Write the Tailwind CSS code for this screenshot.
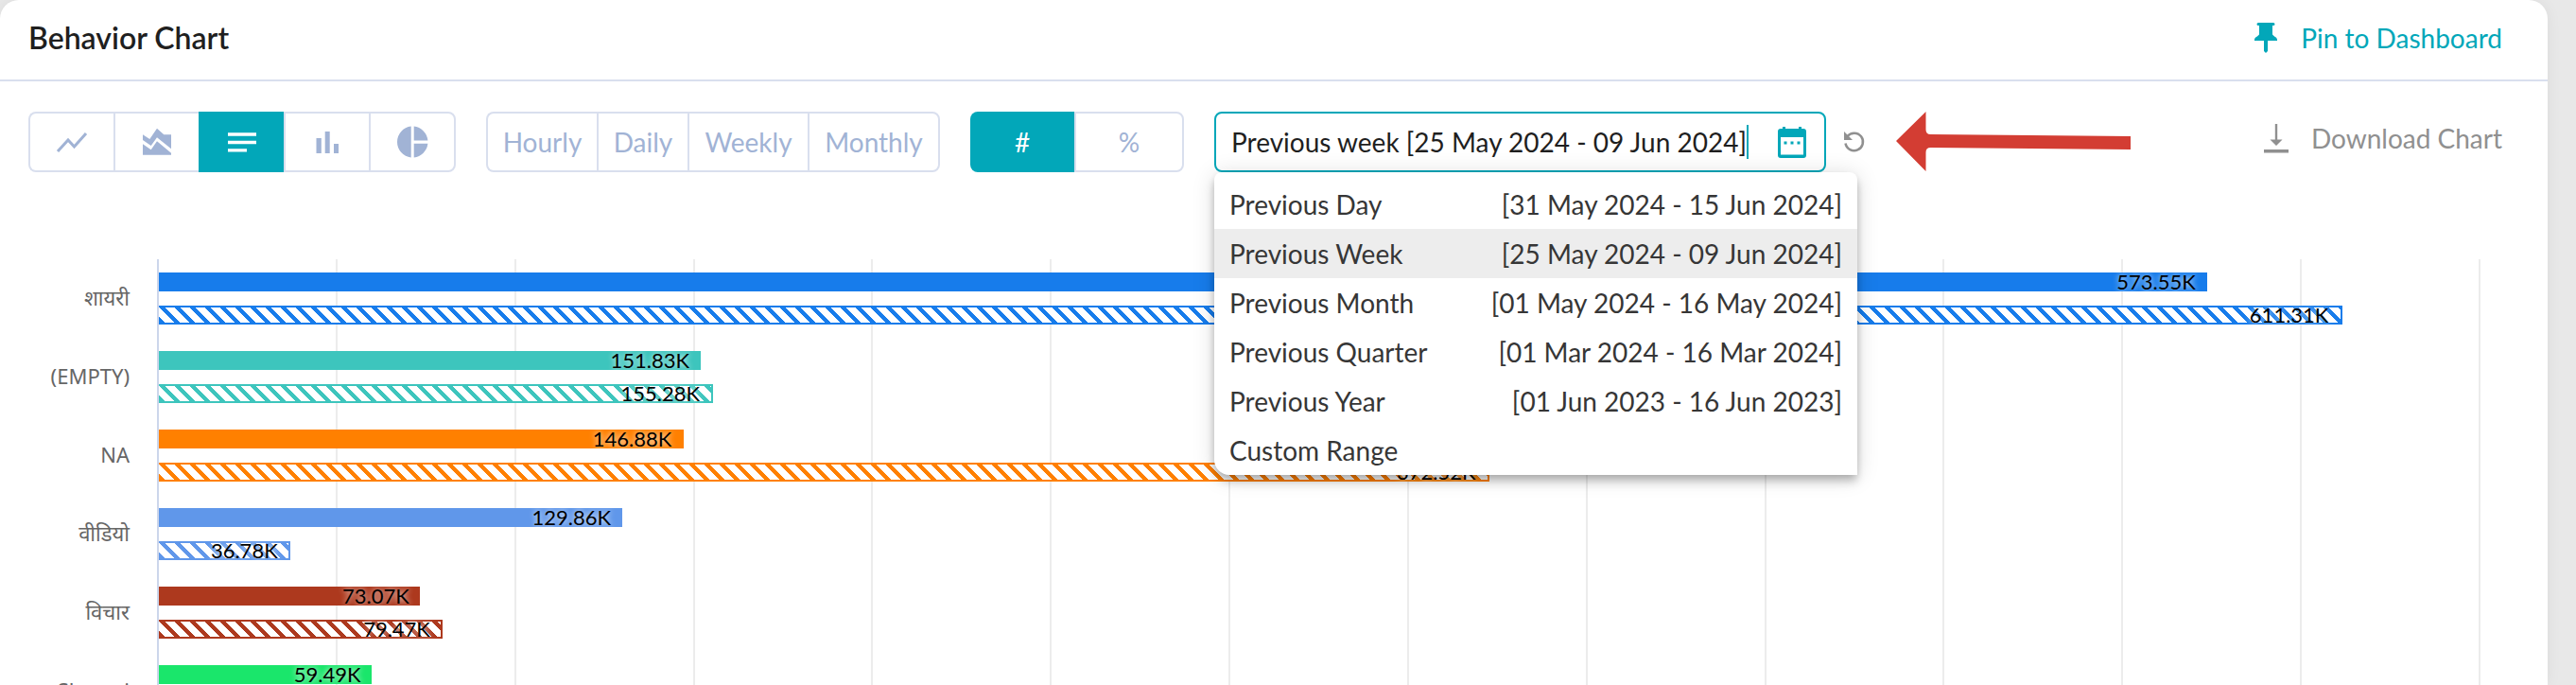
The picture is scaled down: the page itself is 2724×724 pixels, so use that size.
<!DOCTYPE html>
<html lang="en">
<head>
<meta charset="utf-8">
<title>Behavior Chart</title>
<script src="https://cdn.jsdelivr.net/npm/@tailwindcss/browser@4"></script>
</head>
<body class="h-screen overflow-hidden bg-[#e8e8e8] font-['Lato','Noto_Sans',sans-serif] text-[28px] leading-9">
<main class="mr-[30px] h-full overflow-hidden rounded-t-[20px] bg-white shadow-[0_0_16px_rgba(0,0,0,0.06)]">
  <header class="flex h-[86px] items-center justify-between border-b-2 border-[#d9dfee] pr-12 pb-1 pl-[30px]">
    <h1 class="text-[32px] font-semibold text-[#1f1f1f]">Behavior Chart</h1>
    <button type="button" class="flex items-center gap-6 text-[#02a7b9]">
      <svg class="h-9 w-[26px]" viewBox="0 0 26 36" fill="currentColor" aria-hidden="true"><path d="M5 2h16a1.500 1.500 0 0 1 0 3h-1v9c0 2 5 3 5 6v1H15v11l-2 2-2-2V21H1v-1c0-3 5-4 5-6V5H5a1.500 1.500 0 0 1 0-3z"/></svg>
      Pin to Dashboard
    </button>
  </header>

  <section class="flex items-center gap-8 pt-8 pr-12 pl-[30px] text-[#a1b3d5]" aria-label="Chart controls">
    <div class="flex h-16" role="group" aria-label="Chart type">
      <button type="button" aria-label="Line" class="flex w-[90px] items-center justify-center rounded-l-lg border-y-2 border-l-2 border-[#d9dfee]">
        <svg class="size-9" viewBox="0 0 36 36" fill="none" stroke="currentColor" stroke-width="3" aria-hidden="true"><path d="M3 28 14 16 20.500 23 33 9"/></svg>
      </button>
      <button type="button" aria-label="Area" class="flex w-[90px] items-center justify-center border-y-2 border-l-2 border-[#d9dfee]">
        <svg class="size-9" viewBox="0 0 36 36" fill="currentColor" aria-hidden="true"><path d="M3 10.300 10.300 15 18 3.700 25.300 10.300H33v15L18 13.300 11.700 22 3 16zM3 20.300l8.700 6 6.300-9 15 12.400v2H3z"/></svg>
      </button>
      <button type="button" aria-label="Horizontal bars" aria-pressed="true" class="flex w-[90px] items-center justify-center border-y-2 border-l-2 border-[#02a7b9] bg-[#02a7b9] text-white">
        <svg class="size-9" viewBox="0 0 36 36" fill="currentColor" aria-hidden="true"><path d="M3 8.300h30v3.400H3zM3 16.800h30v3.400H3zM3 25.200h20v3.400H3z"/></svg>
      </button>
      <button type="button" aria-label="Columns" class="flex w-[90px] items-center justify-center border-y-2 border-l-2 border-[#d9dfee]">
        <svg class="size-9" viewBox="0 0 36 36" fill="currentColor" aria-hidden="true"><path d="M6.500 14h5.300v16H6.500zM15.700 7h5v23h-5zM25 20h5v10h-5z"/></svg>
      </button>
      <button type="button" aria-label="Pie" class="flex w-[92px] items-center justify-center rounded-r-lg border-2 border-[#d9dfee]">
        <svg class="size-9" viewBox="0 0 36 36" fill="currentColor" aria-hidden="true"><path d="M16.700 1.600a16.500 16.500 0 0 0 0 32.800zM19.700 1.600V16.500H34.400A16.500 16.500 0 0 0 19.700 1.600zM19.700 19.800V34.400A16.500 16.500 0 0 0 34.400 19.800z"/></svg>
      </button>
    </div>

    <div class="flex h-16" role="group" aria-label="Granularity">
      <button type="button" class="w-[117px] rounded-l-lg border-y-2 border-l-2 border-[#d9dfee]">Hourly</button>
      <button type="button" class="w-24 border-y-2 border-l-2 border-[#d9dfee]">Daily</button>
      <button type="button" class="w-[127px] border-y-2 border-l-2 border-[#d9dfee]">Weekly</button>
      <button type="button" class="w-[140px] rounded-r-lg border-2 border-[#d9dfee]">Monthly</button>
    </div>

    <div class="flex h-16" role="group" aria-label="Unit">
      <button type="button" aria-pressed="true" class="w-[110px] rounded-l-lg bg-[#02a7b9] text-white">#</button>
      <button type="button" class="w-[116px] rounded-r-lg border-2 border-[#d9dfee]">%</button>
    </div>

    <div class="relative flex items-center gap-[18px]">
      <label class="flex h-16 w-[647px] items-center rounded-lg border-2 border-[#02a7b9] pr-[18px] pl-4">
        <input type="text" aria-label="Compare with" value="Previous week [25 May 2024 - 09 Jun 2024]" class="field-sizing-content text-[#1f1f1f] outline-none">
        <span class="h-9 w-0.5 bg-[#02a7b9]"></span>
        <svg class="ml-auto h-9 w-8 text-[#02a7b9]" viewBox="0 0 32 36" aria-hidden="true"><path fill="currentColor" fill-rule="evenodd" d="M6 2h3v2h14V2h3v2h2a3 3 0 0 1 3 3v25a3 3 0 0 1-3 3H4a3 3 0 0 1-3-3V7a3 3 0 0 1 3-3h2zM4 13v18.500h24V13zM7.500 17.500h3v3h-3zM14.500 17.500h3v3h-3zM21.500 17.500h3v3h-3z"/></svg>
      </label>
      <button type="button" aria-label="Reset" class="text-[#909090]">
        <svg class="size-6" viewBox="0 0 24 24" aria-hidden="true"><path d="M2.500 13.500A9.300 9.300 0 1 0 4.500 6" fill="none" stroke="currentColor" stroke-width="2.500"/><path d="M1 1v9h9z" fill="currentColor"/></svg>
      </button>
      <ul role="listbox" aria-label="Compare range" class="absolute top-full left-0 z-20 w-[680px] rounded-t-lg rounded-bl-2xl bg-white pt-2 text-[#363636] shadow-[0_4px_8px_-2px_rgba(0,0,0,0.2),0_8px_10px_0_rgba(0,0,0,0.14),0_2px_24px_0_rgba(0,0,0,0.14)]">
        <li><button type="button" class="flex h-[52px] w-full items-center justify-between px-4"><span>Previous Day</span><span>[31 May 2024 - 15 Jun 2024]</span></button></li>
        <li><button type="button" class="flex h-[52px] w-full items-center justify-between bg-[#ededed] px-4"><span>Previous Week</span><span>[25 May 2024 - 09 Jun 2024]</span></button></li>
        <li><button type="button" class="flex h-[52px] w-full items-center justify-between px-4"><span>Previous Month</span><span>[01 May 2024 - 16 May 2024]</span></button></li>
        <li><button type="button" class="flex h-[52px] w-full items-center justify-between px-4"><span>Previous Quarter</span><span>[01 Mar 2024 - 16 Mar 2024]</span></button></li>
        <li><button type="button" class="flex h-[52px] w-full items-center justify-between px-4"><span>Previous Year</span><span>[01 Jun 2023 - 16 Jun 2023]</span></button></li>
        <li><button type="button" class="flex h-[52px] w-full items-center justify-between px-4"><span>Custom Range</span></button></li>
      </ul>
    </div>

    <svg class="h-16 w-[249px]" viewBox="0 0 249 64" fill="#d33d33" aria-hidden="true"><path d="M0 31 31.500 0V19q0 5 5 5L248 26V40L36.500 38q-5 0-5 5V63z"/></svg>

    <button type="button" class="ml-auto flex h-14 items-center gap-6 self-start text-[#909090]">
      <svg class="h-8 w-[26px]" viewBox="0 0 26 32" fill="currentColor" aria-hidden="true"><path d="M11.800 1h2.400v16.500h5.300L13 24l-6.500-6.500h5.300zM0 28h26v3.400H0z"/></svg>
      Download Chart
    </button>
  </section>

  <section class="flex pt-[92px] pr-[71px] text-[22px] leading-5" aria-label="Bar chart">
    <div class="w-[166px] pr-[29px] text-right font-['Noto_Sans',sans-serif] text-[#666]">
      <div class="flex h-[83px] items-center justify-end pb-1">शायरी</div>
      <div class="flex h-[83px] items-center justify-end pb-1">(EMPTY)</div>
      <div class="flex h-[83px] items-center justify-end pb-1">NA</div>
      <div class="flex h-[83px] items-center justify-end pb-1">वीडियो</div>
      <div class="flex h-[83px] items-center justify-end pb-1">विचार</div>
      <div class="flex h-[83px] items-center justify-end pb-1">Shayari</div>
    </div>
    <div class="relative flex-1 border-l-2 border-[#ccd6eb]">
      <div class="absolute inset-0 flex" aria-hidden="true">
        <i class="flex-1 border-r-2 border-[#ececec]"></i><i class="flex-1 border-r-2 border-[#ececec]"></i><i class="flex-1 border-r-2 border-[#ececec]"></i><i class="flex-1 border-r-2 border-[#ececec]"></i><i class="flex-1 border-r-2 border-[#ececec]"></i><i class="flex-1 border-r-2 border-[#ececec]"></i><i class="flex-1 border-r-2 border-[#ececec]"></i><i class="flex-1 border-r-2 border-[#ececec]"></i><i class="flex-1 border-r-2 border-[#ececec]"></i><i class="flex-1 border-r-2 border-[#ececec]"></i><i class="flex-1 border-r-2 border-[#ececec]"></i><i class="flex-1 border-r-2 border-[#ececec]"></i><i class="flex-1 border-r-2 border-[#ececec]"></i>
      </div>
      <div id="bars" class="relative"></div>
    </div>
  </section>
</main>
<script>
  // Values are in thousands; the axis runs from 0 to 650.
  const AXIS_MAX = 650;
  const rows = [
    ['text-[#177ceb]', 573.55, 611.31],
    ['text-[#3dc5bd]', 151.83, 155.28],
    ['text-[#ff8000]', 146.88, 372.52],
    ['text-[#6097ea]', 129.86, 36.78],
    ['text-[#ad391e]', 73.07, 79.47],
    ['text-[#1ae66b]', 59.49, null],
  ];
  const solid = 'flex h-5 justify-end bg-current';
  const hatched = 'flex h-5 items-center justify-end border-y-2 border-r-2 border-current bg-white bg-[linear-gradient(45deg,currentColor_20%,transparent_20%_50%,currentColor_50%_70%,transparent_70%)] bg-size-[16px_16px]';
  const wide = 'w-24 text-black [text-shadow:0_0_6px_white]';
  const narrow = 'w-[82px] text-black [text-shadow:0_0_6px_white]';
  const bar = (value, style) => {
    const el = document.createElement('div');
    el.className = style;
    el.style.width = (value / AXIS_MAX * 100) + '%';
    const label = document.createElement('span');
    label.className = value >= 100 ? wide : narrow;
    label.textContent = value.toFixed(2) + 'K';
    el.append(label);
    return el;
  };
  for (const [color, current, previous] of rows) {
    const row = document.createElement('div');
    row.className = 'flex h-[83px] flex-col gap-[15px] pt-3.5 ' + color;
    row.append(bar(current, solid));
    if (previous !== null) row.append(bar(previous, hatched));
    document.getElementById('bars').append(row);
  }
</script>
</body>
</html>
